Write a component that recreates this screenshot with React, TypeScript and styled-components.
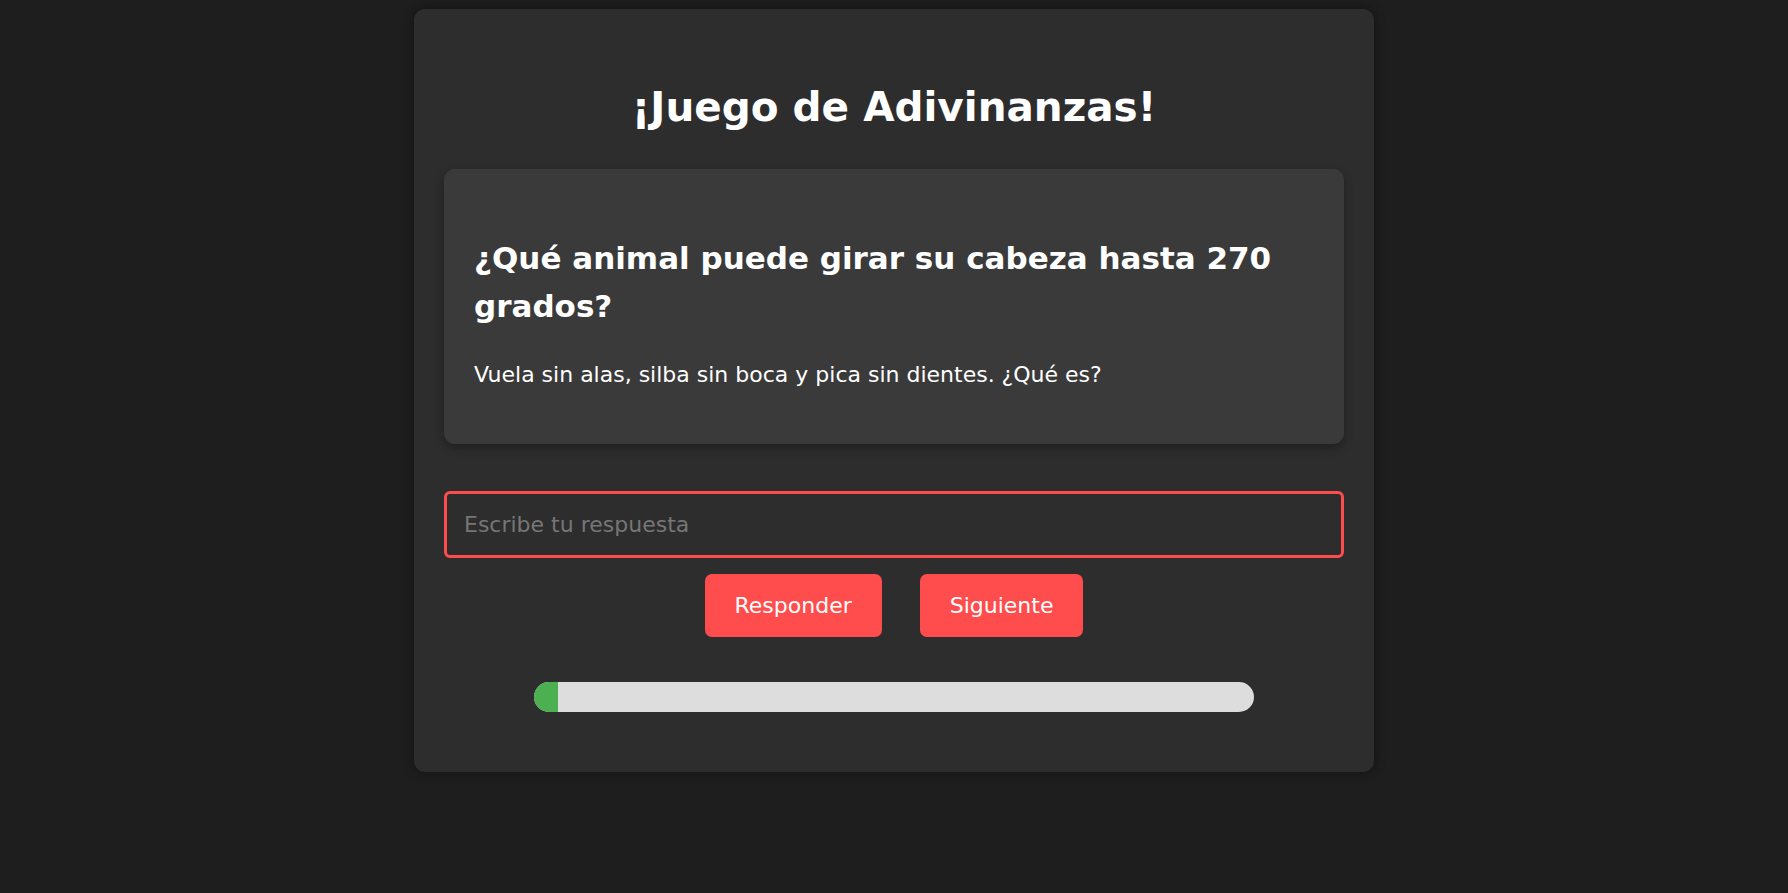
import styled, { createGlobalStyle } from "styled-components";

const GlobalStyle = createGlobalStyle`
  html, body {
    margin: 0;
    padding: 0;
    background: #1e1e1e;
  }
  body {
    font-family: "Comic Sans MS", "DejaVu Sans", sans-serif;
    color: #ffffff;
  }
  * {
    box-sizing: border-box;
  }
`;

const Page = styled.main`
  min-height: 100vh;
  display: flex;
  justify-content: center;
  align-items: flex-start;
  padding-top: 9px;
`;

const GameCard = styled.section`
  width: 960px;
  padding: 30px;
  background: #2d2d2d;
  border-radius: 11px;
  box-shadow: 0 0 12px rgba(0, 0, 0, 0.45);
  display: flex;
  flex-direction: column;
  align-items: center;
`;

const Title = styled.h1`
  margin: 37px 0 30px;
  font-size: 40.5px;
  line-height: 63px;
  font-weight: 700;
  text-align: center;
`;

const RiddleBox = styled.div`
  width: 100%;
  padding: 30px;
  background: #3a3a3a;
  border-radius: 11px;
  box-shadow: 0 4px 10px rgba(0, 0, 0, 0.3);
`;

const Question = styled.h2`
  margin: 35px 0 30px;
  font-size: 31px;
  line-height: 48px;
  font-weight: 700;
`;

const Hint = styled.p`
  margin: 0 0 24px;
  font-size: 22px;
  line-height: 30px;
`;

const AnswerInput = styled.input`
  width: 100%;
  height: 67px;
  margin-top: 47px;
  padding: 0 17px;
  background: #2d2d2d;
  border: 3px solid #ff4c4c;
  border-radius: 6px;
  color: #ffffff;
  font-family: inherit;
  font-size: 22px;
  outline: none;

  &::placeholder {
    color: #767676;
  }
`;

const ButtonRow = styled.div`
  display: flex;
  justify-content: center;
  gap: 38px;
  margin-top: 16px;
`;

const ActionButton = styled.button`
  height: 63px;
  padding: 0 30px;
  background: #ff4c4c;
  color: #ffffff;
  border: none;
  border-radius: 7px;
  font-family: inherit;
  font-size: 22px;
  cursor: pointer;
`;

const ProgressTrack = styled.div`
  width: 720px;
  height: 30px;
  margin: 45px 0 30px;
  background: #dddddd;
  border-radius: 15px;
  overflow: hidden;
`;

const ProgressFill = styled.div`
  height: 100%;
  background: #4caf50;
`;

const total = 30;
const current = 1;

export default function App() {
  return (
    <>
      <GlobalStyle />
      <Page>
        <GameCard>
          <Title>¡Juego de Adivinanzas!</Title>
          <RiddleBox>
            <Question>¿Qué animal puede girar su cabeza hasta 270 grados?</Question>
            <Hint>Vuela sin alas, silba sin boca y pica sin dientes. ¿Qué es?</Hint>
          </RiddleBox>
          <AnswerInput type="text" placeholder="Escribe tu respuesta" />
          <ButtonRow>
            <ActionButton>Responder</ActionButton>
            <ActionButton>Siguiente</ActionButton>
          </ButtonRow>
          <ProgressTrack>
            <ProgressFill style={{ width: `${(current / total) * 100}%` }} />
          </ProgressTrack>
        </GameCard>
      </Page>
    </>
  );
}
